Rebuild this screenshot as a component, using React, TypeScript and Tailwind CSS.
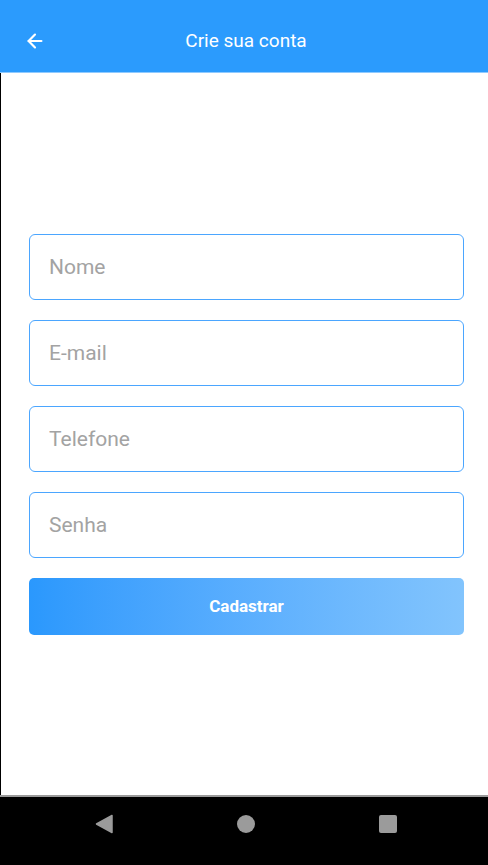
import { ArrowLeft } from "lucide-react";

const fields = ["Nome", "E-mail", "Telefone", "Senha"];

const App = () => {
  return (
    <div
      className="w-[488px] h-[865px] flex flex-col bg-white overflow-hidden"
      style={{ fontFamily: "Roboto, 'Noto Sans', sans-serif" }}
    >
      {/* App bar */}
      <div className="h-[73px] shrink-0 bg-[#2b9bfd] flex items-center px-6 pt-[10px] relative border-b border-[#8fcaff]">
        <ArrowLeft className="w-[22px] h-[22px] text-white" strokeWidth={2.4} />
        <h1 className="absolute left-0 right-0 pl-[4px] text-center text-white text-[19px] pointer-events-none">
          Crie sua conta
        </h1>
      </div>

      {/* Form */}
      <div className="flex-1 border-l border-black flex flex-col pl-[28px] pr-[24px] pt-[161px]">
        <div className="flex flex-col gap-5">
          {fields.map((f) => (
            <input
              key={f}
              placeholder={f}
              className="h-[66px] w-full rounded-[6px] border border-[#4ba6ff] px-[19px] text-[21px] text-gray-800 placeholder:text-[#a3a3a3] outline-none"
            />
          ))}
        </div>
        <button className="mt-5 h-[57px] w-full rounded-[5px] bg-gradient-to-r from-[#2a98fd] to-[#82c4fd] text-white text-[17px] font-bold">
          Cadastrar
        </button>
      </div>

      {/* Android nav bar */}
      <div className="h-[70px] shrink-0 bg-black border-t-2 border-[#9a9a9a] flex items-center justify-center gap-[124px] pl-[4px] pb-[14px]">
        <svg width="18" height="20" viewBox="0 0 18 20">
          <path d="M17 1.5 L1.5 10 L17 18.5 Z" fill="#9b9b9b" stroke="#9b9b9b" strokeWidth="1.5" strokeLinejoin="round" />
        </svg>
        <div className="w-[18px] h-[18px] rounded-full bg-[#9b9b9b]" />
        <div className="w-[18px] h-[18px] rounded-[2px] bg-[#9b9b9b]" />
      </div>
    </div>
  );
};

export default App;
